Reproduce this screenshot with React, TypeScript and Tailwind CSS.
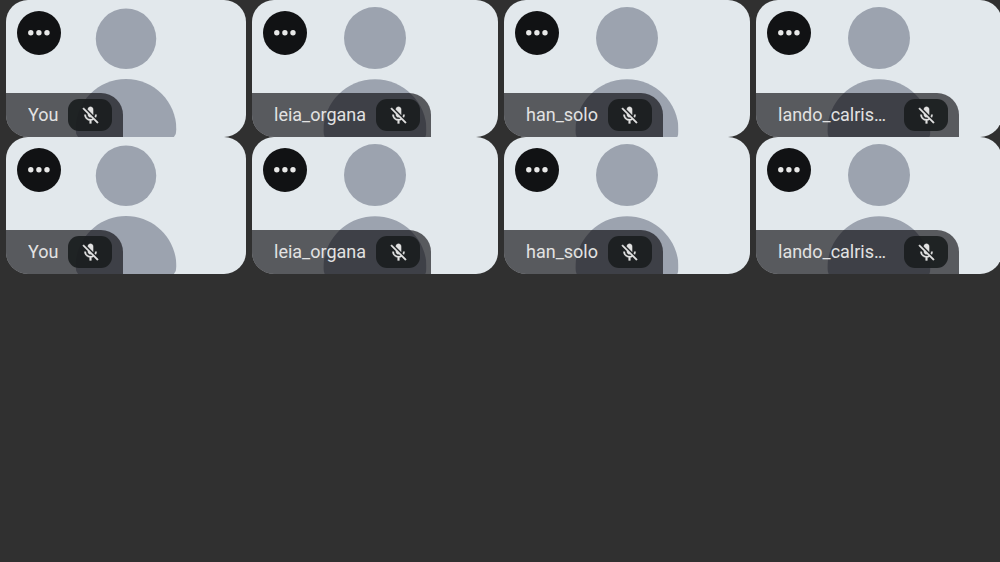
import React from 'react';

const participants = ['You', 'leia_organa', 'han_solo', 'lando_calrissian'];

function Avatar() {
  return (
    <svg viewBox="0 0 100 140" className="absolute top-1/2 left-1/2 w-[42%] -translate-x-1/2 -translate-y-1/2 fill-[#9ca3af]" aria-hidden="true">
      <circle cx="50" cy="40" r="30" />
      <path d="M50 80C77.600 80 100 102.400 100 130Q100 140 90 140H10Q0 140 0 130C0 102.400 22.400 80 50 80Z" />
    </svg>
  );
}

function MutedIcon() {
  return (
    <svg viewBox="0 0 24 24" className="size-[21px] fill-current stroke-current" strokeWidth="0.4" aria-hidden="true">
      <path d="M19 11h-1.7c0 .74-.16 1.43-.43 2.05l1.23 1.23c.56-.98.9-2.09.9-3.28zm-4.02.17c0-.06.02-.11.02-.17V5c0-1.66-1.34-3-3-3S9 3.340 9 5v.18l5.980 5.990zM4.270 3L3 4.270l6.010 6.010V11c0 1.660 1.330 3 2.990 3 .22 0 .44-.03.65-.08l1.660 1.660c-.71.33-1.500.52-2.310.52-2.760 0-5.300-2.100-5.300-5.100H5c0 3.410 2.720 6.230 6 6.720V21h2v-3.280c.91-.13 1.770-.45 2.540-.9L19.730 21 21 19.730 4.270 3z" />
    </svg>
  );
}

function Tile({ name }: { name: string }) {
  return (
    <article className="relative flex h-[137px] min-w-0 flex-col items-start justify-between overflow-hidden rounded-[22px] bg-[#e2e8ec]">
      <Avatar />
      <button type="button" aria-label={`Options for ${name}`} className="relative mt-[11px] ml-[11px] flex size-11 items-center justify-center rounded-full bg-[#111214] text-[#e8e8e8]">
        <svg viewBox="0 0 22 6" className="h-1.5 w-[22px] fill-current" aria-hidden="true">
          <circle cx="2.800" cy="2.800" r="2.700" />
          <circle cx="10.900" cy="2.800" r="2.700" />
          <circle cx="19" cy="2.800" r="2.700" />
        </svg>
      </button>
      <div className="relative flex h-11 items-center gap-2.5 rounded-tr-[22px] bg-[#08060b]/63 pr-[11px] pl-[22px]">
        <span className="max-w-[116px] truncate text-lg text-[#e2e2e2]">{name}</span>
        <button type="button" aria-label={`${name} is muted`} className="flex h-8 w-11 items-center justify-center rounded-[11px] bg-[#1a1d1e]/90 text-[#e2e2e2]">
          <MutedIcon />
        </button>
      </div>
    </article>
  );
}

function Row() {
  return (
    <section className="-mr-0.5 grid grid-cols-[240fr_246fr_246fr_246fr] gap-1.5 pl-1.5">
      {participants.map((name) => (
        <Tile key={name} name={name} />
      ))}
    </section>
  );
}

export default function App() {
  return (
    <main className="min-h-screen overflow-hidden bg-[#303030] font-['Roboto',sans-serif]">
      <Row />
      <Row />
    </main>
  );
}
